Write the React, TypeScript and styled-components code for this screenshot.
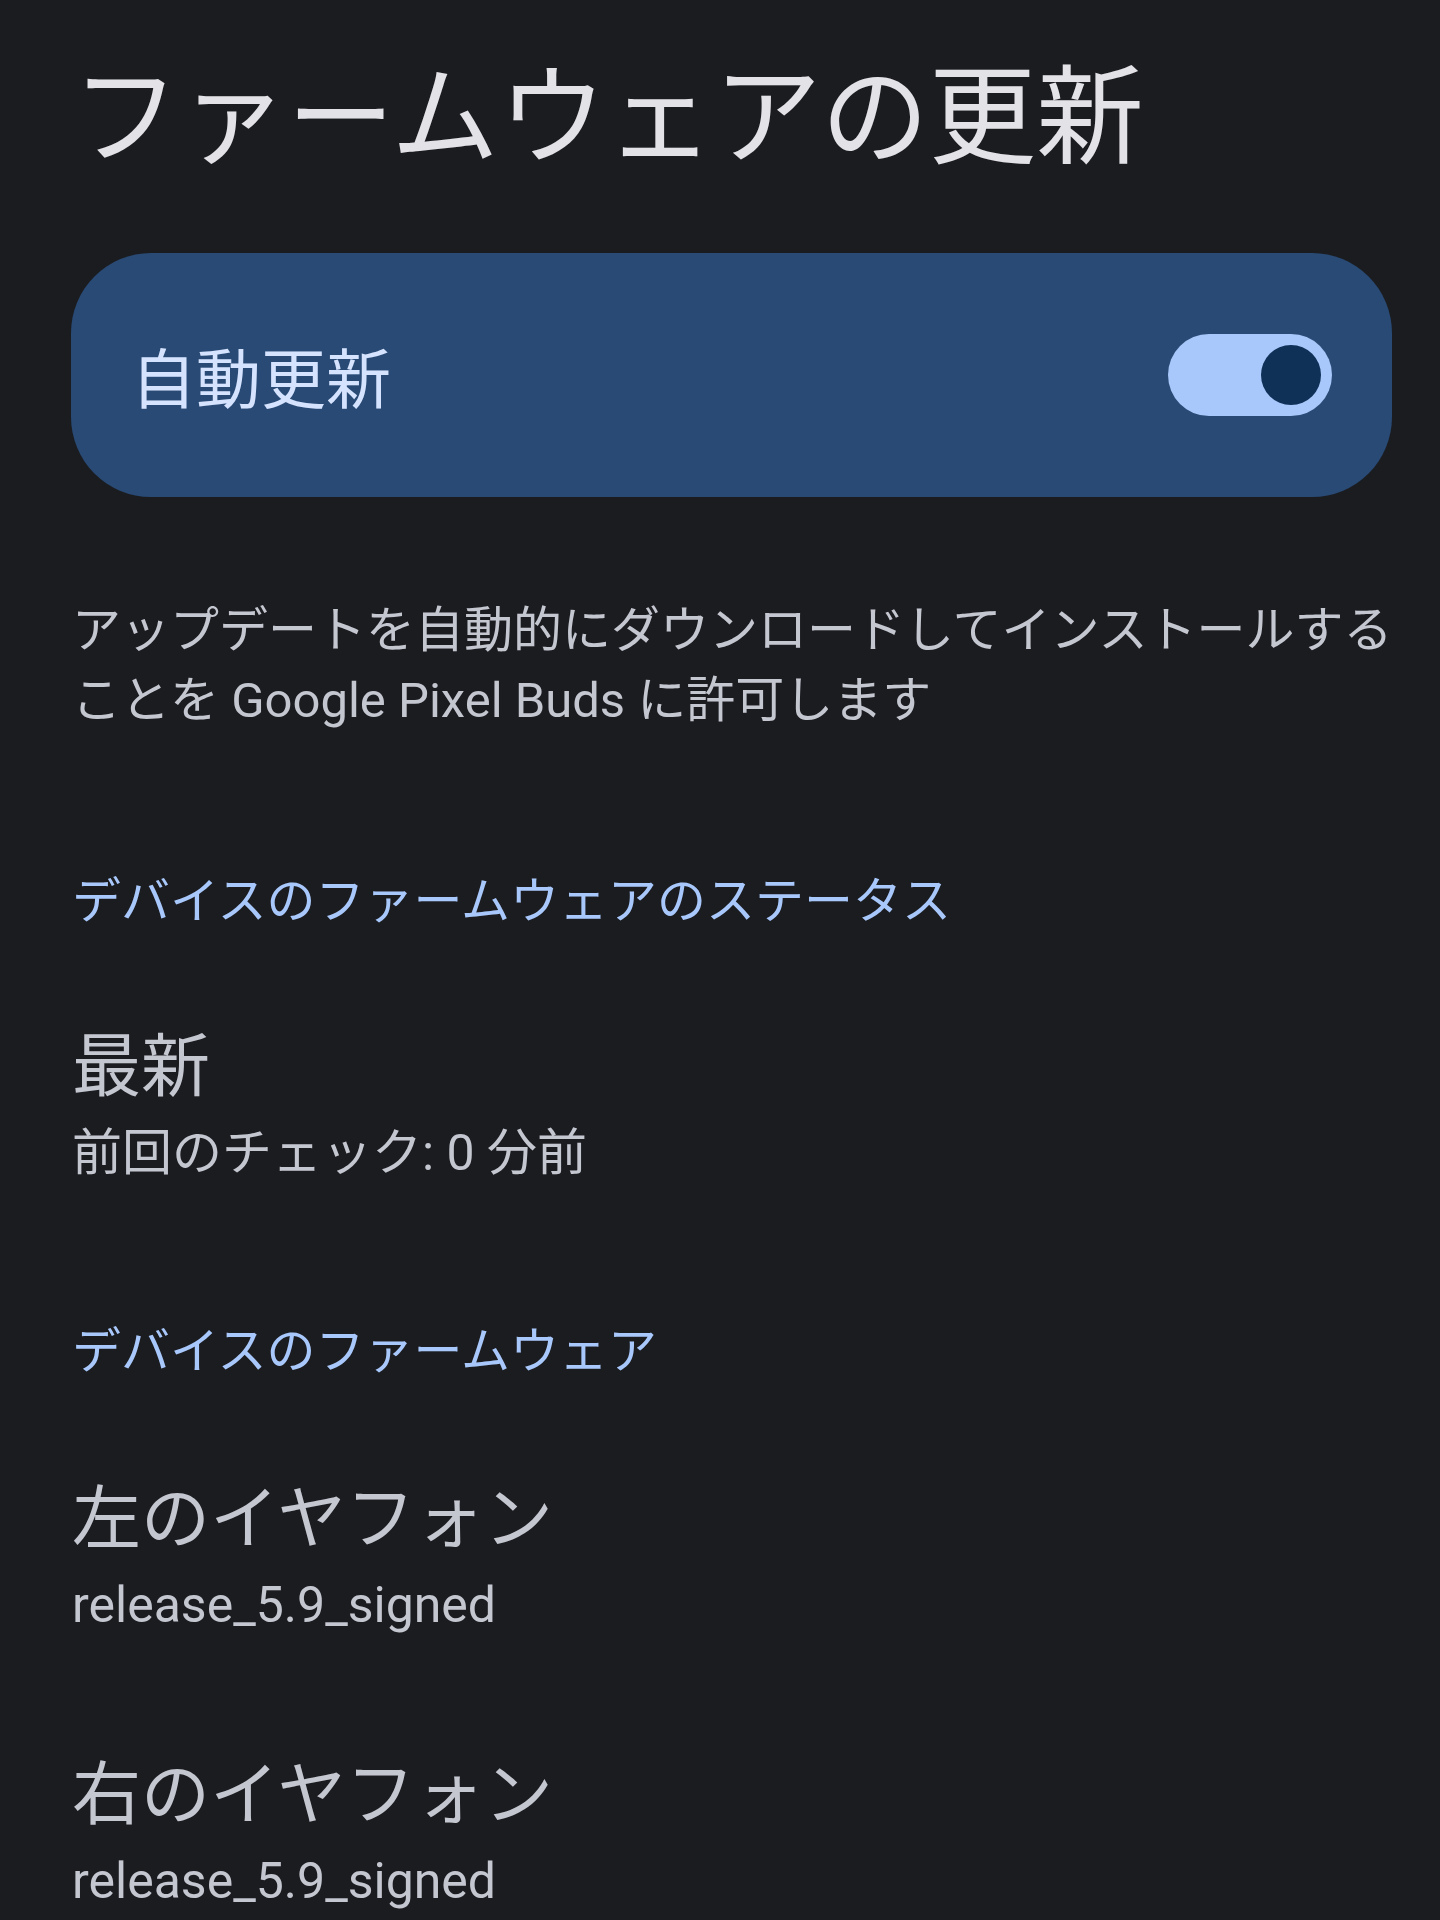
import styled, { createGlobalStyle } from "styled-components";

const GlobalStyle = createGlobalStyle`
  html, body {
    margin: 0;
    padding: 0;
    background: #1b1c20;
  }

  body {
    font-family: "Roboto", "Noto Sans CJK JP", sans-serif;
    -webkit-font-smoothing: antialiased;
  }
`;

const Page = styled.main`
  display: flex;
  flex-direction: column;
  min-height: 1920px;
  padding: 55px 48px 0 72px;
  box-sizing: border-box;
  background: #1b1c20;
`;

const Title = styled.h1`
  margin: 0;
  font-family: "Noto Sans CJK JP", sans-serif;
  font-size: 107.5px;
  font-weight: 400;
  line-height: 1;
  color: #e3e2e6;
`;

const ToggleCard = styled.section`
  display: flex;
  align-items: center;
  justify-content: space-between;

  height: 244px;
  margin: 90px 0 0 -1px;
  padding: 0 60px 0 60px;
  box-sizing: border-box;

  background: #284a74;
  border-radius: 80px;
`;

const CardLabel = styled.span`
  font-family: "Noto Sans CJK JP", sans-serif;
  font-size: 65px;
  color: #d6e3ff;
`;

const Track = styled.button<{ $on: boolean }>`
  display: flex;
  align-items: center;
  justify-content: ${(p) => (p.$on ? "flex-end" : "flex-start")};

  width: 164px;
  height: 82px;
  padding: 0 11px;
  box-sizing: border-box;

  border: none;
  border-radius: 41px;
  background: #a8c7fa;
`;

const Thumb = styled.span`
  width: 60px;
  height: 60px;
  border-radius: 50%;
  background: #0f3158;
`;

const Description = styled.p`
  margin: 99px -14px 0 0;
  font-size: 49px;
  line-height: 70px;
  color: #c4c6d0;
`;

const SectionHeader = styled.h2<{ $gap: number }>`
  margin: ${(p) => p.$gap}px 0 0;
  font-family: "Noto Sans CJK JP", sans-serif;
  font-size: 49px;
  font-weight: 400;
  line-height: 70px;
  color: #a8c7fa;
`;

const Item = styled.div<{ $gap: number }>`
  display: flex;
  flex-direction: column;
  margin-top: ${(p) => p.$gap}px;
`;

const ItemTitle = styled.div`
  font-family: "Noto Sans CJK JP", sans-serif;
  font-size: 69px;
  line-height: 90px;
  color: #c4c6d0;
`;

const ItemValue = styled.div`
  font-size: 50px;
  line-height: 70px;
  margin-top: 12px;
  color: #c4c6d0;
`;

export default function App() {
  return (
    <>
      <GlobalStyle />
      <Page>
        <Title>ファームウェアの更新</Title>

        <ToggleCard>
          <CardLabel>自動更新</CardLabel>
          <Track $on aria-label="自動更新">
            <Thumb />
          </Track>
        </ToggleCard>

        <Description>
          アップデートを自動的にダウンロードしてインストールすることを Google Pixel Buds に許可します
        </Description>

        <SectionHeader $gap={126}>デバイスのファームウェアのステータス</SectionHeader>
        <Item $gap={84}>
          <ItemTitle>最新</ItemTitle>
          <ItemValue>前回のチェック: 0 分前</ItemValue>
        </Item>

        <SectionHeader $gap={124}>デバイスのファームウェア</SectionHeader>
        <Item $gap={86}>
          <ItemTitle>左のイヤフォン</ItemTitle>
          <ItemValue>release_5.9_signed</ItemValue>
        </Item>
        <Item $gap={104}>
          <ItemTitle>右のイヤフォン</ItemTitle>
          <ItemValue>release_5.9_signed</ItemValue>
        </Item>
      </Page>
    </>
  );
}
